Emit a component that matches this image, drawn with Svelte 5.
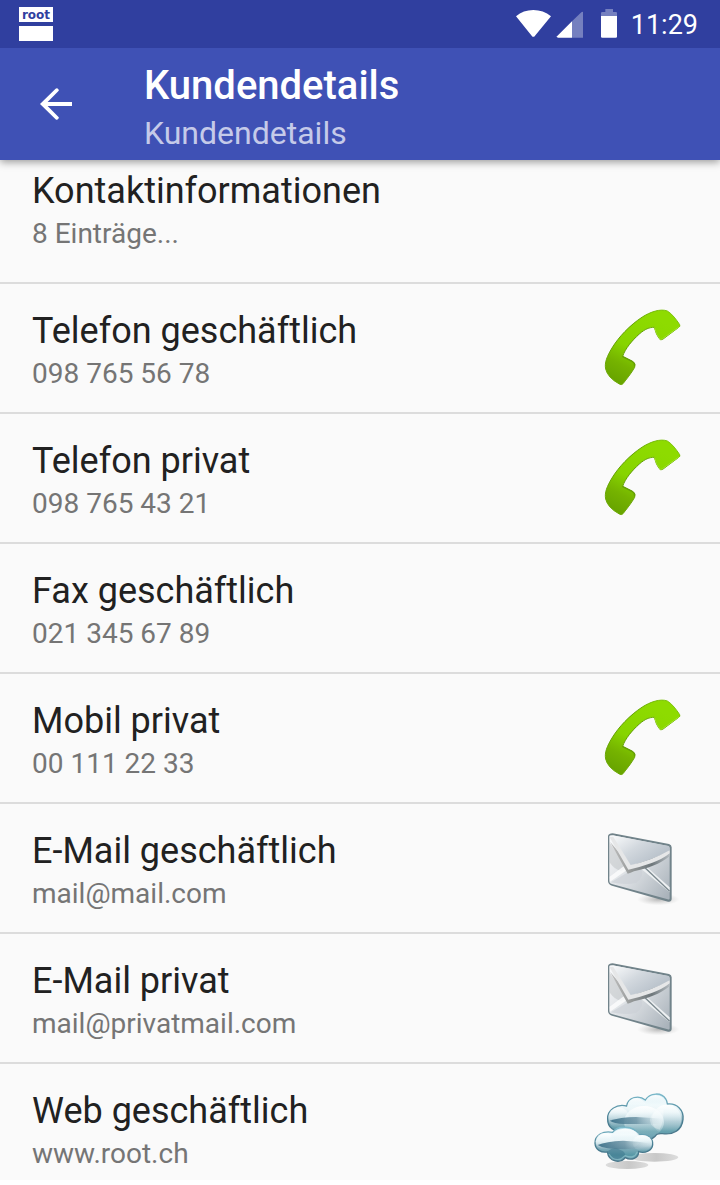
<script>
  const entries = [
    { title: 'Kontaktinformationen', detail: '8 Einträge...' },
    { title: 'Telefon geschäftlich', detail: '098 765 56 78', icon: 'phone', action: 'Anrufen' },
    { title: 'Telefon privat', detail: '098 765 43 21', icon: 'phone', action: 'Anrufen' },
    { title: 'Fax geschäftlich', detail: '021 345 67 89' },
    { title: 'Mobil privat', detail: '00 111 22 33', icon: 'phone', action: 'Anrufen' },
    { title: 'E-Mail geschäftlich', detail: 'mail@mail.com', icon: 'mail', action: 'E-Mail senden' },
    { title: 'E-Mail privat', detail: 'mail@privatmail.com', icon: 'mail', action: 'E-Mail senden' },
    { title: 'Web geschäftlich', detail: 'www.root.ch', icon: 'web', action: 'Webseite öffnen' }
  ];
</script>

<svelte:head><title>Kundendetails</title></svelte:head>

<div class="status">
  <div class="logo"><span>root</span><i></i></div>
  <div class="system">
    <svg class="signals" viewBox="48 0 306 144" aria-hidden="true">
      <path fill="#fff" d="M48 49Q70 30 100 30T153 49L105 107Q100 114 95 107Z" />
      <path fill="#7580bf" d="M249 36V113H216V64L244 37Q248 34 249 36Z" />
      <path fill="#fff" d="M216 64V113H175Q169 113 171 109Z" />
      <path fill="#7580bf" d="M303 48V39Q303 36 307 36H316V27H339V36H348Q351 36 351 39V48Z" />
      <path fill="#fff" d="M303 48H351V110Q351 113 347 113H307Q303 113 303 110Z" />
    </svg>
    <time>11:29</time>
  </div>
</div>

<header>
  <button class="back" aria-label="Zurück">
    <svg viewBox="0 0 24 24" aria-hidden="true"><path fill="#fff" d="M20 11H7.8l5.2-5.2q.8-.5.2-1.2-.7-.8-1.4-.2L4 12l7.8 7.6q.7.6 1.4-.2.6-.7-.2-1.2L7.8 13H20z" /></svg>
  </button>
  <div class="heading">
    <h1>Kundendetails</h1>
    <p>Kundendetails</p>
  </div>
</header>

<main>
  <ul>
    {#each entries as entry, i}
      <li>
        <div class="text">
          <h2>{entry.title}</h2>
          <p>{entry.detail}</p>
        </div>
        {#if entry.icon}
          <button class="action" aria-label={`${entry.action}: ${entry.title}`}>
            {#if entry.icon === 'phone'}
              <svg viewBox="6 15 288 288" aria-hidden="true">
                <defs>
                  <linearGradient id={`green-${i}`} x1="0.65" y1="0.1" x2="0.2" y2="1">
                    <stop offset="0" stop-color="#8edb00" />
                    <stop offset="0.5" stop-color="#87d400" />
                    <stop offset="0.75" stop-color="#75b300" />
                    <stop offset="1" stop-color="#67a300" />
                  </linearGradient>
                  <linearGradient id={`rim-${i}`} x1="0.9" y1="0" x2="0.1" y2="1">
                    <stop offset="0" stop-color="#81c90b" />
                    <stop offset="0.4" stop-color="#5d9804" />
                    <stop offset="1" stop-color="#6daa04" />
                  </linearGradient>
                </defs>
                <path fill={`url(#green-${i})`} stroke={`url(#rim-${i})`} stroke-width="3" stroke-linejoin="round" d="M47 222C43 203 51 184 66 159C86 126 119 91 157 66C181 51 211 40 232 48C246 56 260 75 269 89Q272 94 265 98L218 133Q212 137 208 131L200 118Q196 107 193 97C178 97 165 102 148 117C126 137 106 160 98 184L128 199Q139 206 134 217C124 235 109 253 99 266Q94 271 88 267Q53 248 47 222Z" />
                <path fill="none" stroke="#5d9407" stroke-opacity=".6" stroke-width="4" stroke-linecap="round" d="M98 185L127 200Q134 204 133 210" />
                <path fill="none" stroke="#a2e32b" stroke-width="3" stroke-linecap="round" d="M194 99Q197 116 211 134L218 131L266 96" />
              </svg>
            {:else if entry.icon === 'mail'}
              <svg viewBox="6 0 288 288" aria-hidden="true">
                <defs>
                  <linearGradient id={`paper-${i}`} x1="0" y1="0.1" x2="1" y2="0.9">
                    <stop offset="0" stop-color="#f7f8fa" />
                    <stop offset="0.5" stop-color="#d9dde1" />
                    <stop offset="1" stop-color="#aab3bb" />
                  </linearGradient>
                  <linearGradient id={`flap-${i}`} x1="0" y1="0" x2="1" y2="0.8">
                    <stop offset="0" stop-color="#fafbfc" />
                    <stop offset="0.45" stop-color="#d2d8de" />
                    <stop offset="1" stop-color="#b0bac4" />
                  </linearGradient>
                  <linearGradient id={`fold-${i}`} x1="0" y1="0" x2="1" y2="0">
                    <stop offset="0" stop-color="#c1c1c1" />
                    <stop offset="0.35" stop-color="#969999" />
                    <stop offset="0.7" stop-color="#6e777b" />
                    <stop offset="1" stop-color="#b3babf" />
                  </linearGradient>
                  <radialGradient id={`shade-${i}`}>
                    <stop offset="0" stop-color="#999" stop-opacity=".7" />
                    <stop offset="1" stop-color="#bbb" stop-opacity="0" />
                  </radialGradient>
                </defs>
                <ellipse cx="205" cy="238" rx="64" ry="18" fill={`url(#shade-${i})`} />
                <path fill="#71838a" d="M54 48Q56 40 68 40L237 72Q245 75 245 82V237Q244 247 234 245L66 197Q55 194 54 184Z" />
                <path fill={`url(#paper-${i})`} d="M58 49Q59 45 67 46L235 78Q239 79 239 84V235Q239 240 233 238L68 193Q58 191 58 183Z" />
                <path fill="#bcc0c2" opacity=".5" d="M58 126Q72 148 94 153L108 142L58 66Z" />
                <path fill="#fff" opacity=".75" d="M59 170L101 139L112 149L60 185Z" />
                <path fill="#cbd0d5" opacity=".65" d="M63 187L119 154L153 145Q164 172 139 188Q108 197 63 187Z" />
                <path fill="#edf0f2" d="M153 146L168 139L239 202V217Z" />
                <path fill="none" stroke="#7c898f" stroke-width="4" d="M165 143L239 214" />
                <path fill={`url(#fold-${i})`} d="M60 65L113 161Q121 159 132 154C175 144 209 133 239 109V96L121 138Z" />
                <path fill="#e6e7e8" d="M59 52L115 149Q149 142 185 129Q219 117 239 100V91Q181 123 122 135L72 50Z" />
                <path fill={`url(#flap-${i})`} d="M67 46L235 78Q239 79 239 90Q184 122 122 135Z" />
              </svg>
            {:else}
              <svg viewBox="21 0 288 288" aria-hidden="true">
                <defs>
                  <linearGradient id={`cloud-${i}`} x1="0" y1="0" x2="0" y2="1">
                    <stop offset="0" stop-color="#b9dfeb" />
                    <stop offset="0.22" stop-color="#f7fdff" />
                    <stop offset="0.4" stop-color="#e0eef2" />
                    <stop offset="0.6" stop-color="#84adbb" />
                    <stop offset="0.82" stop-color="#5798a6" />
                    <stop offset="1" stop-color="#76a5b7" />
                  </linearGradient>
                  <linearGradient id={`edge-${i}`} x1="0" y1="0" x2="0" y2="1">
                    <stop offset="0" stop-color="#7bb9ca" />
                    <stop offset="0.5" stop-color="#487e92" />
                    <stop offset="1" stop-color="#4a7588" />
                  </linearGradient>
                  <linearGradient id={`glow-${i}`} x1="0" y1="0" x2="0" y2="1">
                    <stop offset="0" stop-color="#fff" stop-opacity=".95" />
                    <stop offset="0.45" stop-color="#e9f6f9" stop-opacity=".6" />
                    <stop offset="1" stop-color="#fff" stop-opacity="0" />
                  </linearGradient>
                  <linearGradient id={`band-${i}`} x1="0" y1="0" x2="1" y2="0">
                    <stop offset="0" stop-color="#42768e" />
                    <stop offset="0.5" stop-color="#618a9d" stop-opacity=".75" />
                    <stop offset="1" stop-color="#cbdfe5" stop-opacity=".1" />
                  </linearGradient>
                  <linearGradient id={`ground-${i}`} x1="0" y1="0" x2="1" y2="0">
                    <stop offset="0" stop-color="#ddd" />
                    <stop offset="0.55" stop-color="#c8c8c8" />
                    <stop offset="1" stop-color="#ddd" />
                  </linearGradient>
                </defs>
                <ellipse cx="208" cy="232" rx="72" ry="13" fill={`url(#ground-${i})`} />
                <ellipse cx="126" cy="255" rx="64" ry="12" fill={`url(#ground-${i})`} />
                <path fill={`url(#cloud-${i})`} stroke={`url(#edge-${i})`} stroke-width="4" d="M125 78C129 51 162 44 181 60C194 38 230 35 243 58Q246 63 247 72C275 68 297 90 294 118C291 151 264 165 233 161Q222 160 215 163C209 172 199 180 184 178L117 153C88 159 67 142 68 116C67 91 94 70 125 78Z" />
                <circle cx="101" cy="113" r="31" fill={`url(#glow-${i})`} opacity=".8" />
                <ellipse cx="154" cy="79" rx="27" ry="25" fill={`url(#glow-${i})`} />
                <ellipse cx="212" cy="74" rx="32" ry="29" fill={`url(#glow-${i})`} />
                <circle cx="245" cy="118" r="44" fill={`url(#glow-${i})`} />
                <ellipse cx="177" cy="126" rx="60" ry="48" fill={`url(#glow-${i})`} />
                <path fill={`url(#band-${i})`} d="M74 122Q105 112 153 111L235 116V132H116Q87 131 74 122Z" />
                <path fill="#fff" opacity=".3" d="M235 88Q198 91 195 120Q196 144 224 149Q238 123 235 88Z" />
                <path fill={`url(#cloud-${i})`} stroke={`url(#edge-${i})`} stroke-width="4" d="M83 157C96 137 145 134 161 164C184 161 205 172 203 194C202 211 180 222 161 215C161 234 139 243 121 233C107 250 72 248 67 216C48 219 31 209 30 190C29 166 54 151 83 157Z" />
                <ellipse cx="60" cy="184" rx="28" ry="25" fill={`url(#glow-${i})`} />
                <ellipse cx="121" cy="177" rx="45" ry="31" fill={`url(#glow-${i})`} />
                <ellipse cx="172" cy="189" rx="29" ry="24" fill={`url(#glow-${i})`} />
                <path fill={`url(#band-${i})`} d="M38 195Q63 184 114 182Q161 183 201 191Q180 205 118 208Q58 208 38 195Z" />
                <path fill="#356f87" opacity=".45" d="M69 213Q86 200 107 210Q125 216 119 233Q96 252 75 232Q69 225 69 213Z" />
                <path fill="none" stroke="#8fc2cb" stroke-opacity=".7" stroke-width="4" d="M72 222Q84 244 108 237L120 227Q147 239 157 216" />
              </svg>
            {/if}
          </button>
        {/if}
      </li>
    {/each}
  </ul>
</main>

<style>
  :global(body) { margin: 0; background: #fff; font-family: Roboto, sans-serif; }
  h1, h2, p, ul { margin: 0; padding: 0; font-weight: 400; }
  svg { display: block; }
  button { border: 0; padding: 0; background: none; cursor: pointer; }
  .status {
    position: relative; z-index: 2;
    display: flex; justify-content: space-between; align-items: flex-start;
    height: 48px; box-sizing: border-box; padding: 0 22px 0 19px;
    background: #303f9f; color: #fff;
  }
  .logo { width: 34px; padding-top: 7px; }
  .logo span {
    display: block; height: 15px; background: #fff; color: #303f9f;
    font: 700 12px/16px "DejaVu Sans", sans-serif; text-align: center;
  }
  .logo i { display: block; height: 15px; margin-top: 4px; background: #fff; }
  .system { display: flex; gap: 13px; }
  .signals { width: 102px; height: 48px; }
  time { font-size: 27px; line-height: 50px; }
  header {
    position: relative; display: flex; align-items: center; gap: 64px;
    height: 112px; padding-left: 32px;
    background: #3f51b5; color: #fff;
    box-shadow: 0 2px 8px rgba(0, 0, 0, 0.4);
  }
  .back, .back svg { width: 48px; height: 48px; }
  .heading { padding-top: 10px; }
  h1 { font-size: 40px; line-height: 48px; font-weight: 500; }
  .heading p { font-size: 32px; line-height: 46px; color: #c5cae9; }
  main { background: #fafafa; }
  ul { list-style: none; }
  li {
    display: flex; justify-content: space-between; align-items: flex-start;
    padding: 16px 32px; min-height: 96px; border-bottom: 2px solid #dcdcdc;
  }
  li:first-child { padding-top: 0; padding-bottom: 26px; }
  li:last-child { padding-bottom: 4px; border-bottom: 0; }
  .text { padding-top: 8px; }
  h2 { font-size: 36px; line-height: 46px; color: #212121; }
  .text p { font-size: 28px; line-height: 40px; color: #757575; }
  .action, .action svg { width: 96px; height: 96px; }
</style>
